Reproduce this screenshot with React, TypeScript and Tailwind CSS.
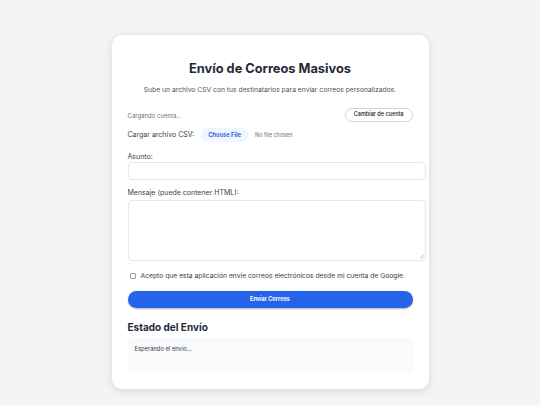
import React from "react";

export default function App() {
  return (
    <div className="min-h-[405px] w-full bg-[#f3f4f6] pt-[35px] pb-4" style={{ fontFamily: "Inter, 'Noto Sans', sans-serif" }}>
      <div className="mx-auto w-[317px] rounded-[10px] bg-white px-4 pb-[16px] pt-[24px] shadow-[0_2px_8px_rgba(0,0,0,0.12)]">
        <h1 className="text-center text-[12.8px] font-bold leading-[20px] text-[#1f2937]">Envío de Correos Masivos</h1>
        <p className="mt-[6px] text-center text-[6.75px] leading-[10px] text-[#4b5563]">
          Sube un archivo CSV con tus destinatarios para enviar correos personalizados.
        </p>
        <div className="mt-[13px] flex h-[14px] items-center justify-between">
          <span className="text-[6px] text-[#6b7280]">Cargando cuenta...</span>
          <button className="h-[14px] rounded-full border border-[#d1d5db] bg-white px-[8px] text-[5.5px] font-medium leading-none text-[#111827]">
            Cambiar de cuenta
          </button>
        </div>
        <div className="mt-[6px] flex h-[14px] items-center">
          <span className="text-[7px] text-[#374151]">Cargar archivo CSV:</span>
          <span className="ml-[7px] flex h-[14px] items-center rounded-full bg-[#eff6ff] px-[7px] text-[5.8px] font-semibold text-[#1d4ed8]">Choose File</span>
          <span className="ml-[7px] text-[5.5px] text-[#6b7280]">No file chosen</span>
        </div>
        <div className="mt-[10px] text-[7px] leading-[10px] text-[#374151]">Asunto:</div>
        <div className="h-[18px] w-[298px] rounded-[4px] border border-[#e5e7eb] bg-white"></div>
        <div className="mt-[8px] text-[7px] leading-[10px] text-[#374151]">Mensaje (puede contener HTML):</div>
        <div className="relative mt-[2px] h-[61px] w-[298px] rounded-[4px] border border-[#e5e7eb] bg-white">
          <svg className="absolute bottom-[1px] right-[1px]" width="5" height="5" viewBox="0 0 5 5">
            <path d="M4.5 1 L1 4.5 M4.5 3 L3 4.5" stroke="#9ca3af" strokeWidth="0.6" />
          </svg>
        </div>
        <div className="mt-[10px] flex h-[10px] items-center">
          <span className="ml-[2px] box-border block h-[6px] w-[6px] shrink-0 rounded-[1px] border border-[#9ca3af]"></span>
          <span className="ml-[5px] whitespace-nowrap text-[6.75px] text-[#374151]">
            Acepto que esta aplicación envíe correos electrónicos desde mi cuenta de Google.
          </span>
        </div>
        <button className="mt-[10px] flex h-[17px] w-full items-center justify-center rounded-full bg-[#2563eb] text-[5.5px] font-bold text-white shadow-[0_1px_2px_rgba(0,0,0,0.3)]">
          Enviar Correos
        </button>
        <h2 className="mt-[13px] text-[10px] font-bold leading-[12px] text-[#1f2937]">Estado del Envío</h2>
        <div className="mt-[5px] h-[35px] w-full rounded-[4px] bg-[#f8fafc] px-[7px] pt-[7px] text-[5.8px] leading-[8px] text-[#374151]">
          Esperando el envío...
        </div>
      </div>
    </div>
  );
}
